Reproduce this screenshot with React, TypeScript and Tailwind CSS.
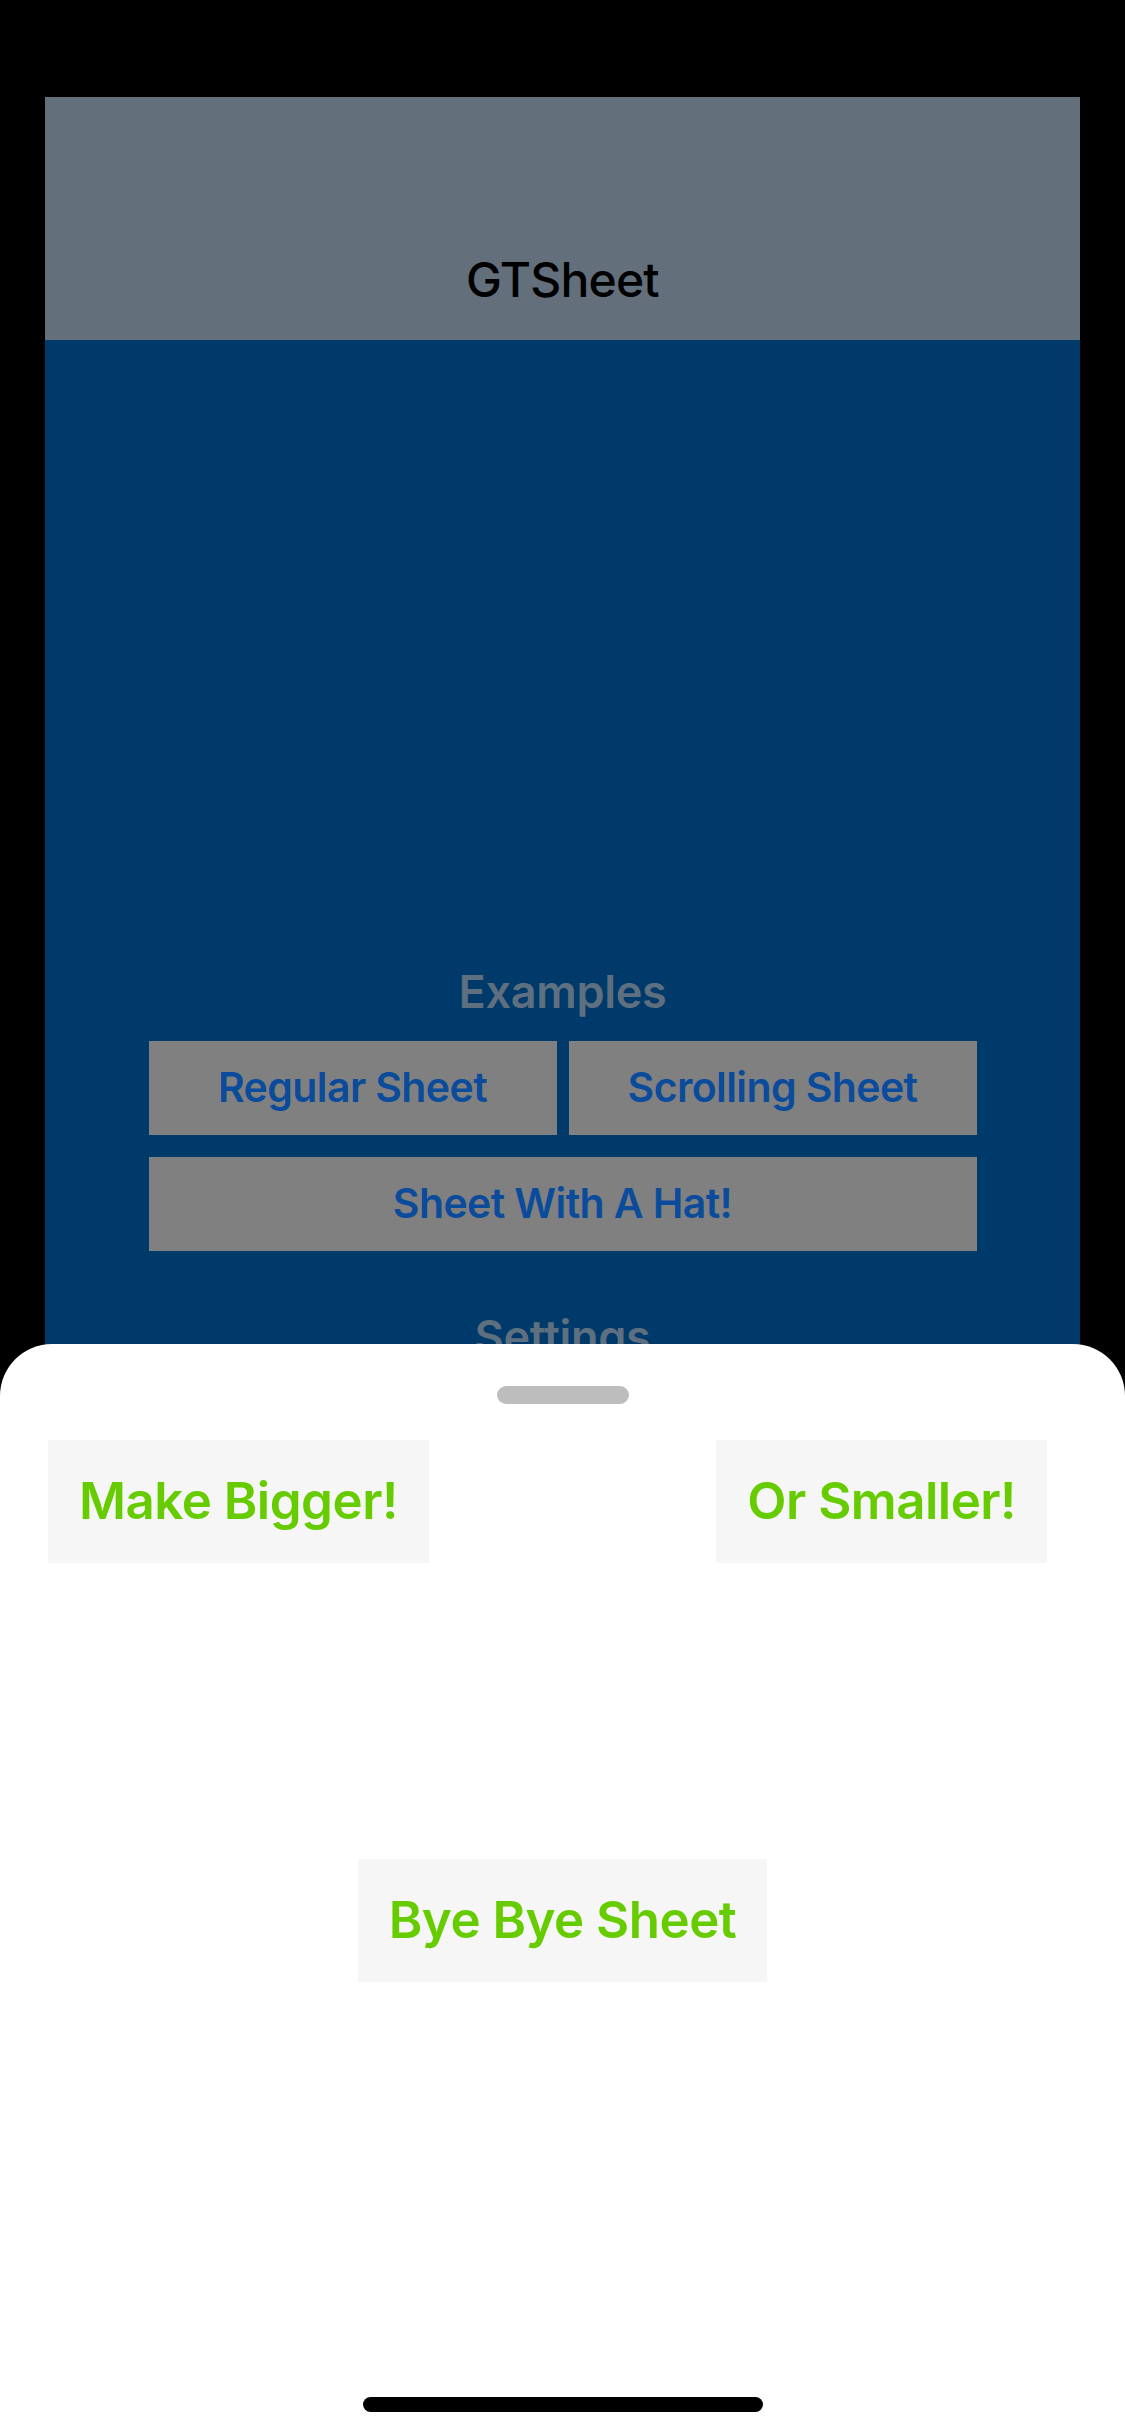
import React from "react";

const font = { fontFamily: 'Inter, "Noto Sans", "Liberation Sans", sans-serif' };

function BlueButton({ label, className = "" }: { label: string; className?: string }) {
  return (
    <div
      className={`flex items-center justify-center bg-[#808080] h-[94px] text-[41px] font-semibold text-[#0b4b9b] tracking-[-0.6px] ${className}`}
    >
      {label}
    </div>
  );
}

function GreenButton({ label }: { label: string }) {
  return (
    <div className="flex items-center justify-center bg-[#f6f6f6] h-[123px] px-[31px] text-[51px] font-semibold text-[#66cc00] tracking-[-0.5px]">
      {label}
    </div>
  );
}

export default function App() {
  return (
    <div className="relative w-[1125px] h-[2436px] bg-black overflow-hidden" style={font}>
      <div className="pt-[97px] px-[45px] flex flex-col h-full">
        <div className="h-[243px] bg-[#636f7b] flex items-end justify-center pb-[36px]">
          <span className="text-[48px] font-medium leading-none text-black tracking-[-0.8px]">GTSheet</span>
        </div>
        <div className="flex-1 bg-[#003a6a] flex flex-col items-center pt-[629px]">
          <div className="text-[45px] font-semibold leading-none text-[#5e6f80] tracking-[-0.3px]">Examples</div>
          <div className="mt-[27px] w-[828px] flex flex-col gap-[22px]">
            <div className="flex gap-[12px]">
              <BlueButton label="Regular Sheet" className="flex-1" />
              <BlueButton label="Scrolling Sheet" className="flex-1" />
            </div>
            <BlueButton label="Sheet With A Hat!" />
          </div>
          <div className="mt-[63px] text-[45px] font-semibold leading-none text-[#5e6f80] tracking-[-0.3px]">Settings</div>
        </div>
      </div>

      <div className="absolute left-0 right-0 top-[1344px] bottom-0 bg-white rounded-t-[52px] flex flex-col">
        <div className="flex justify-center pt-[42px]">
          <div className="w-[132px] h-[18px] rounded-full bg-[#bdbdbd]" />
        </div>
        <div className="flex justify-between pl-[48px] pr-[78px] mt-[36px]">
          <GreenButton label="Make Bigger!" />
          <GreenButton label="Or Smaller!" />
        </div>
        <div className="flex justify-center mt-[296px]">
          <GreenButton label="Bye Bye Sheet" />
        </div>
        <div className="mt-auto flex justify-center pb-[24px]">
          <div className="w-[400px] h-[15px] rounded-full bg-black" />
        </div>
      </div>
    </div>
  );
}
